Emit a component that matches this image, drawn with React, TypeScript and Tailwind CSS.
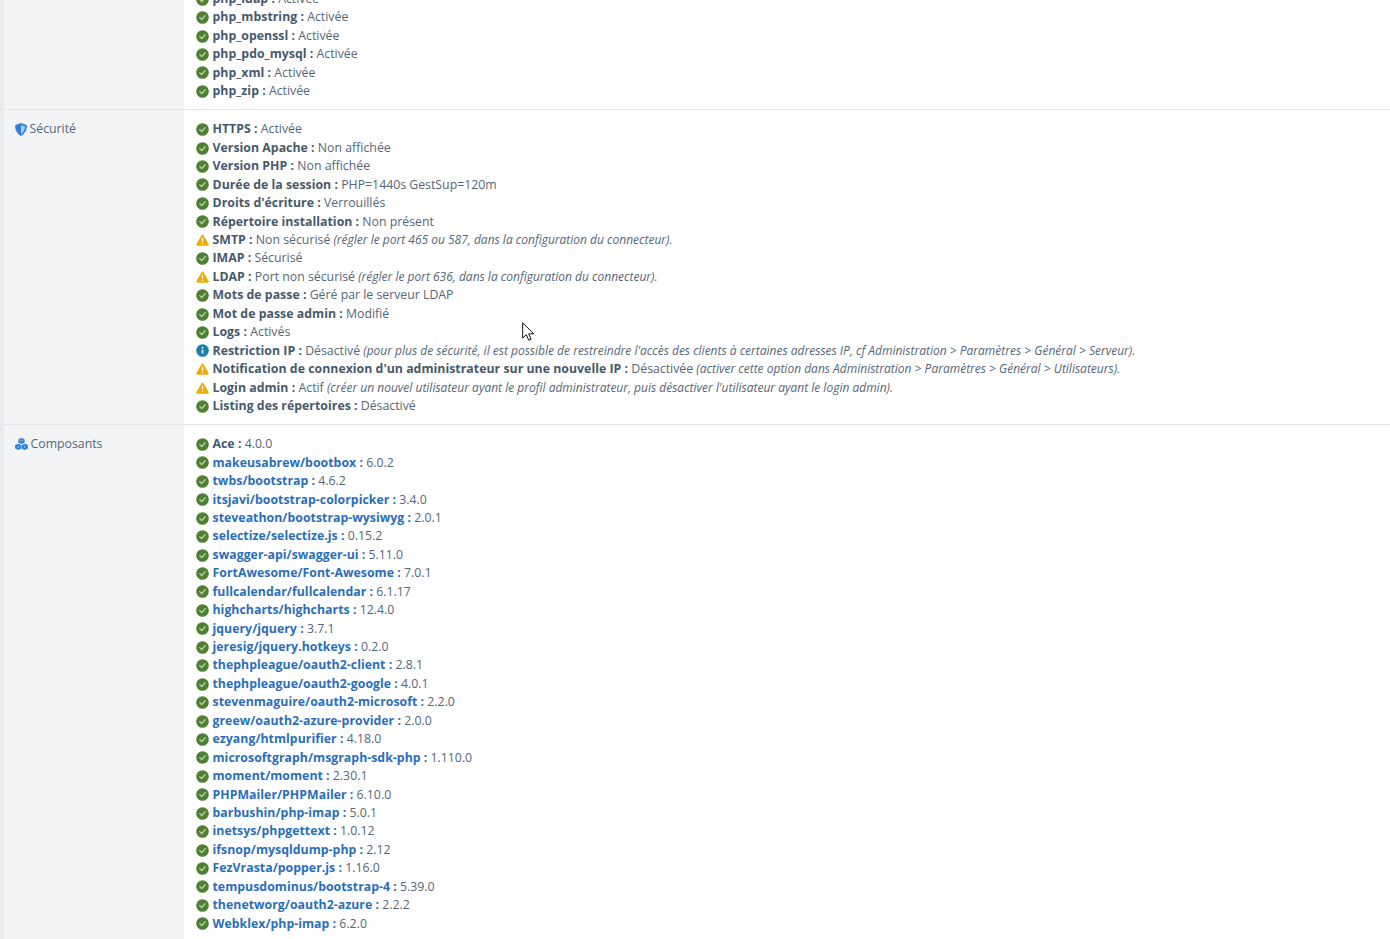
type Status = 'ok' | 'warn' | 'info';
type Row = { status?: Status; label: string; value: string; note?: string; link?: boolean };

function StatusIcon({ status = 'ok' }: { status?: Status }) {
  if (status === 'warn') {
    return (
      <svg viewBox="0 0 14 13" className="h-[12px] w-[13px] shrink-0">
        <path d="M7 .6c.5 0 .9.3 1.1.7l5.5 9.6c.5.8-.1 1.8-1.1 1.8H1.500c-1 0-1.600-1-1.100-1.800L5.900 1.300C6.100.9 6.500.6 7 .6z" fill="#efab06" />
        <rect x="6.300" y="3.800" width="1.400" height="4.400" rx=".6" fill="#fff" />
        <circle cx="7" cy="10" r=".85" fill="#fff" />
      </svg>
    );
  }
  if (status === 'info') {
    return (
      <svg viewBox="0 0 13 13" className="h-[13px] w-[13px] shrink-0">
        <circle cx="6.500" cy="6.500" r="6.300" fill="#1d7ea6" />
        <circle cx="6.500" cy="3.800" r=".95" fill="#cfe5ee" />
        <rect x="5.600" y="5.500" width="1.800" height="4.200" rx=".4" fill="#cfe5ee" />
      </svg>
    );
  }
  return (
    <svg viewBox="0 0 13 13" className="h-[13px] w-[13px] shrink-0">
      <circle cx="6.500" cy="6.500" r="6.300" fill="#4e7f33" />
      <path d="M3.800 6.700l1.900 1.900 3.500-3.900" fill="none" stroke="#c9dcb9" strokeWidth="1.200" strokeLinecap="round" strokeLinejoin="round" />
    </svg>
  );
}

function ShieldIcon() {
  return (
    <svg viewBox="0 0 12 13" className="h-[13px] w-3 shrink-0">
      <path d="M6 0l5.400 2.100c.3.1.5.4.5.7C11.900 6.800 9.900 10.900 6 13 2.100 10.900.1 6.800.1 2.800c0-.3.2-.6.5-.7z" fill="#2f7fdc" />
      <path d="M6 2v9c2.400-1.600 3.900-4.300 4-7.400z" fill="#a9cff5" />
    </svg>
  );
}

function CubesIcon() {
  return (
    <svg viewBox="0 0 13 12" className="h-3 w-[13px] shrink-0" fill="#2f7fdc">
      <path d="M6.500 0l3.100 1.300v3.400L6.500 6 3.400 4.700V1.300z" />
      <path d="M3.300 5.700l3 1.300v3.600L3.300 12 .1 10.600V7z" />
      <path d="M9.700 5.700l3.200 1.300v3.600L9.700 12l-3-1.400V7z" />
      <path d="M4.800 2l1.700.7 1.700-.7M3.300 7.700v2.200M9.700 7.700v2.200" fill="none" stroke="#bcd8f6" strokeWidth=".7" />
    </svg>
  );
}

function Line({ row }: { row: Row }) {
  return (
    <div className="flex h-[18.45px] items-center gap-[4px] whitespace-nowrap">
      <StatusIcon status={row.status} />
      <span>
        <strong className={row.link ? 'font-bold tracking-[0.03px] text-[#2a6ebb]' : 'font-bold tracking-[0.03px] text-[#46596d]'}>{row.label} :</strong>{' '}
        {row.value}
        {row.note && <em className="text-[12px]"> {row.note}</em>}
      </span>
    </div>
  );
}

const extensions: Row[] = [
  { label: 'php_ldap', value: 'Activée' },
  { label: 'php_mbstring', value: 'Activée' },
  { label: 'php_openssl', value: 'Activée' },
  { label: 'php_pdo_mysql', value: 'Activée' },
  { label: 'php_xml', value: 'Activée' },
  { label: 'php_zip', value: 'Activée' },
];

const security: Row[] = [
  { label: 'HTTPS', value: 'Activée' },
  { label: 'Version Apache', value: 'Non affichée' },
  { label: 'Version PHP', value: 'Non affichée' },
  { label: 'Durée de la session', value: 'PHP=1440s GestSup=120m' },
  { label: "Droits d'écriture", value: 'Verrouillés' },
  { label: 'Répertoire installation', value: 'Non présent' },
  { status: 'warn', label: 'SMTP', value: 'Non sécurisé', note: '(régler le port 465 ou 587, dans la configuration du connecteur).' },
  { label: 'IMAP', value: 'Sécurisé' },
  { status: 'warn', label: 'LDAP', value: 'Port non sécurisé', note: '(régler le port 636, dans la configuration du connecteur).' },
  { label: 'Mots de passe', value: 'Géré par le serveur LDAP' },
  { label: 'Mot de passe admin', value: 'Modifié' },
  { label: 'Logs', value: 'Activés' },
  { status: 'info', label: 'Restriction IP', value: 'Désactivé', note: "(pour plus de sécurité, il est possible de restreindre l'accès des clients à certaines adresses IP, cf Administration > Paramètres > Général > Serveur)." },
  { status: 'warn', label: "Notification de connexion d'un administrateur sur une nouvelle IP", value: 'Désactivée', note: '(activer cette option dans Administration > Paramètres > Général > Utilisateurs).' },
  { status: 'warn', label: 'Login admin', value: 'Actif', note: "(créer un nouvel utilisateur ayant le profil administrateur, puis désactiver l'utilisateur ayant le login admin)." },
  { label: 'Listing des répertoires', value: 'Désactivé' },
];

const packages: [string, string][] = [
  ['makeusabrew/bootbox', '6.0.2'],
  ['twbs/bootstrap', '4.6.2'],
  ['itsjavi/bootstrap-colorpicker', '3.4.0'],
  ['steveathon/bootstrap-wysiwyg', '2.0.1'],
  ['selectize/selectize.js', '0.15.2'],
  ['swagger-api/swagger-ui', '5.11.0'],
  ['FortAwesome/Font-Awesome', '7.0.1'],
  ['fullcalendar/fullcalendar', '6.1.17'],
  ['highcharts/highcharts', '12.4.0'],
  ['jquery/jquery', '3.7.1'],
  ['jeresig/jquery.hotkeys', '0.2.0'],
  ['thephpleague/oauth2-client', '2.8.1'],
  ['thephpleague/oauth2-google', '4.0.1'],
  ['stevenmaguire/oauth2-microsoft', '2.2.0'],
  ['greew/oauth2-azure-provider', '2.0.0'],
  ['ezyang/htmlpurifier', '4.18.0'],
  ['microsoftgraph/msgraph-sdk-php', '1.110.0'],
  ['moment/moment', '2.30.1'],
  ['PHPMailer/PHPMailer', '6.10.0'],
  ['barbushin/php-imap', '5.0.1'],
  ['inetsys/phpgettext', '1.0.12'],
  ['ifsnop/mysqldump-php', '2.12'],
  ['FezVrasta/popper.js', '1.16.0'],
  ['tempusdominus/bootstrap-4', '5.39.0'],
  ['thenetworg/oauth2-azure', '2.2.2'],
  ['Webklex/php-imap', '6.2.0'],
];

const components: Row[] = [
  { label: 'Ace', value: '4.0.0' },
  ...packages.map(([label, value]) => ({ label, value, link: true })),
];

function Section({ icon, title, rows }: { icon?: React.ReactNode; title?: string; rows: Row[] }) {
  return (
    <div className="flex border-b border-[#e2e4e7]">
      <div className="flex w-[180px] shrink-0 items-start gap-[3px] bg-[#f3f4f6] pl-[10.5px] pt-[10px]">
        {icon && <span className="flex h-[18.45px] items-center">{icon}</span>}
        {title && <span className="leading-[18.45px]">{title}</span>}
      </div>
      <div className="min-w-0 flex-1 pb-[8.8px] pl-[11.5px] pr-3 pt-[10px]">
        {rows.map((row) => (
          <Line key={row.label} row={row} />
        ))}
      </div>
    </div>
  );
}

export default function App() {
  return (
    <div className="relative h-[939px] overflow-hidden bg-white font-['Open_Sans',sans-serif] text-[12.3px] text-[#54667a]">
      <div className="-mt-[20px] border-l-4 border-[#e8eaee]">
        <Section rows={extensions} />
        <Section icon={<ShieldIcon />} title="Sécurité" rows={security} />
        <Section icon={<CubesIcon />} title="Composants" rows={components} />
      </div>
      <svg viewBox="0 0 13 19" className="absolute left-[522px] top-[322px] h-[19px] w-[13px]">
        <path d="M.7.8v15.300l3.600-3.400 2.400 5.500 2.400-1-2.400-5.400h5z" fill="#fff" stroke="#111" strokeWidth="1" strokeLinejoin="round" />
      </svg>
    </div>
  );
}
